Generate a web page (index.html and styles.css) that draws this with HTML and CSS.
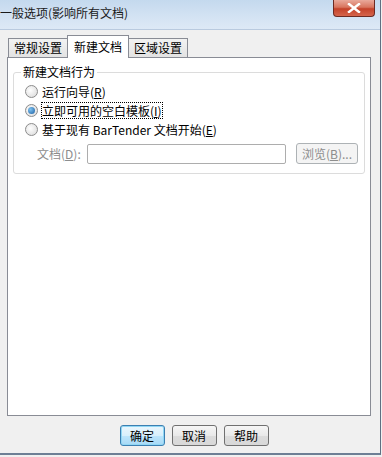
FILE: index.html
```html
<!DOCTYPE html>
<html lang="zh-CN">
<head>
    <meta charset="UTF-8">
    <title>一般选项</title>
    <link rel="stylesheet" href="styles.css">
</head>
<body>
    <div class="window">
        <div class="titlebar">
            <span class="title">一般选项(影响所有文档)</span>
            <span class="close-btn">
                <svg width="14" height="10" viewBox="0 0 14 10">
                    <path d="M2 1 L12 9 M12 1 L2 9" stroke="#fff" stroke-width="2.4" stroke-linecap="square"/>
                </svg>
            </span>
        </div>
        <div class="content">
            <div class="tabs">
                <div class="tab">常规设置</div>
                <div class="tab active">新建文档</div>
                <div class="tab">区域设置</div>
            </div>
            <div class="panel">
                <fieldset class="group">
                    <legend>新建文档行为</legend>
                    <div class="radio-row">
                        <span class="radio"></span>运行向导(<u>R</u>)
                    </div>
                    <div class="radio-row">
                        <span class="radio checked"></span><span class="focus">立即可用的空白模板(<u>I</u>)</span>
                    </div>
                    <div class="radio-row">
                        <span class="radio"></span>基于现有 BarTender 文档开始(<u>E</u>)
                    </div>
                    <div class="doc-row">
                        <span class="doc-label">文档(<u>D</u>):</span>
                        <span class="doc-input"></span>
                        <span class="btn disabled">浏览(<u>B</u>)...</span>
                    </div>
                </fieldset>
            </div>
            <div class="footer">
                <span class="btn default">确定</span>
                <span class="btn">取消</span>
                <span class="btn">帮助</span>
            </div>
        </div>
    </div>
</body>
</html>
```

FILE: styles.css
```css
body {
    margin: 0;
    font-family: "Noto Sans CJK SC", "Liberation Sans", sans-serif;
    font-size: 12px;
    color: #000;
    background: #f0f0f0;
}
.window {
    width: 381px;
    height: 455px;
    border-right: 1px solid #5f6f82;
    border-bottom: 2px solid #6d7f95;
    box-sizing: border-box;
    display: flex;
    flex-direction: column;
    background: #f0f0f0;
}
.titlebar {
    height: 30px;
    display: flex;
    align-items: flex-start;
    justify-content: space-between;
    background: linear-gradient(to bottom, #c4d9ee 0%, #d4e3f3 60%, #dde9f6 100%);
    border-bottom: 1px solid #b9cadf;
    box-sizing: border-box;
}
.title {
    margin-top: 5px;
    font-size: 12px;
    color: #1a1a1a;
    line-height: 16px;
}
.close-btn {
    width: 42px;
    height: 17px;
    margin-right: 5px;
    border: 1px solid #6c2a22;
    border-top: none;
    border-radius: 0 0 4px 4px;
    background: linear-gradient(to bottom, #e9a99b 0%, #d8755f 45%, #c4422a 55%, #d5654c 100%);
    display: flex;
    align-items: center;
    justify-content: center;
    box-sizing: border-box;
}
.content {
    flex: 1;
    display: flex;
    flex-direction: column;
    padding: 8px 9px 0 7px;
}
.tabs {
    display: flex;
    align-items: flex-end;
    height: 19px;
    padding-left: 1px;
    position: relative;
    z-index: 1;
}
.tab {
    height: 19px;
    padding: 0 5px;
    line-height: 18px;
    border: 1px solid #898c95;
    border-bottom: none;
    background: linear-gradient(to bottom, #f2f2f2, #e3e3e3);
    box-sizing: border-box;
    margin-right: -1px;
}
.tab.active {
    background: #fff;
    padding: 0 6px;
    line-height: 22px;
    margin-bottom: -1px;
    height: 23px;
    z-index: 2;
}
.panel {
    height: 359px;
    background: #fff;
    border: 1px solid #898c95;
    box-sizing: border-box;
    padding: 6px 5px 0 5px;
}
.group {
    margin: 0;
    border: 1px solid #dcdcdc;
    border-radius: 3px;
    padding: 2px 6px 9px 7px;
}
.group legend {
    padding: 0 2px;
    margin-left: 0;
    line-height: 16px;
}
.radio-row {
    display: flex;
    align-items: center;
    height: 19px;
    padding-left: 4px;
}
.radio {
    width: 11px;
    height: 11px;
    border-radius: 50%;
    border: 1px solid #8c8c8c;
    background: radial-gradient(circle at 40% 40%, #fefefe, #d8d8d8);
    margin-right: 4px;
    position: relative;
}
.radio.checked::after {
    content: "";
    position: absolute;
    left: 2px;
    top: 2px;
    width: 7px;
    height: 7px;
    border-radius: 50%;
    background: radial-gradient(circle at 35% 35%, #7ec2f0, #1d5fa2);
}
.focus {
    outline: 1px dotted #000;
    outline-offset: 0;
    line-height: 15px;
}
.doc-row {
    display: flex;
    align-items: center;
    margin-top: 4px;
    padding-left: 16px;
}
.doc-label {
    color: #8d8d8d;
    width: 50px;
}
.doc-input {
    width: 199px;
    height: 20px;
    border: 1px solid #adadad;
    border-radius: 2px;
    box-sizing: border-box;
    background: #fff;
    margin-right: 10px;
}
.btn {
    height: 21px;
    padding: 0 8px;
    line-height: 19px;
    border: 1px solid #707070;
    border-radius: 3px;
    box-sizing: border-box;
    background: linear-gradient(to bottom, #f6f6f6 0%, #e9e9e9 50%, #dcdcdc 51%, #d8d8d8 100%);
}
.btn.disabled {
    color: #8d8d8d;
    border-color: #adb2b5;
    background: #f4f4f4;
    width: 62px;
    padding: 0;
    text-align: center;
}
.btn.default {
    border-color: #3c7fb1;
    background: linear-gradient(to bottom, #eaf6fd 0%, #d9f0fc 50%, #bee6fd 51%, #a7d9f5 100%);
    box-shadow: inset 0 0 0 1px #90d7f5;
}
.footer {
    flex: 1;
    display: flex;
    justify-content: center;
    align-items: center;
    gap: 7px;
    padding-left: 10px;
    padding-top: 2px;
}
.footer .btn {
    width: 45px;
    text-align: center;
    padding: 0;
}
```
